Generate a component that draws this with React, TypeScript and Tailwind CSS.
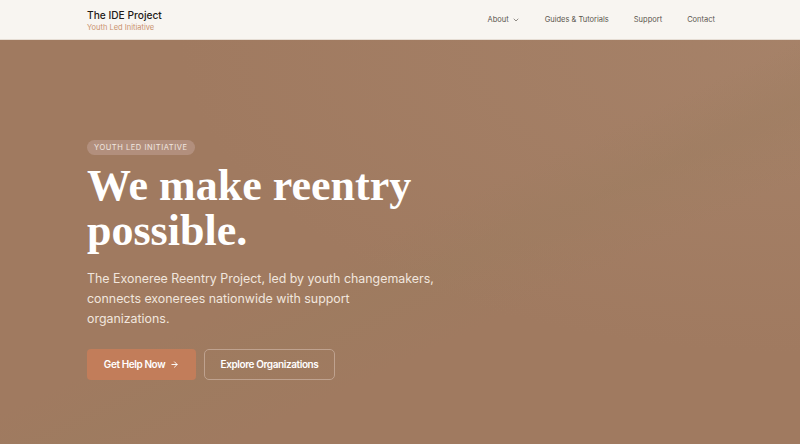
import { ArrowRight, ChevronDown } from "lucide-react";

// Top navigation bar
function Header() {
  return (
    <header className="h-[40px] bg-[#f8f5f1] border-b border-[#e6ddd4] flex items-center justify-between pl-[87px] pr-[85px]">
      <div className="flex flex-col leading-none">
        <span className="text-[10.2px] font-medium text-[#1f1b18] mt-[3px]">The IDE Project</span>
        <span className="text-[7.5px] text-[#c9916d] mt-[4px]">Youth Led Initiative</span>
      </div>
      <nav className="flex items-center gap-[25px] text-[7.5px] text-[#5b554f] mt-[1px]">
        <span className="flex items-center gap-[3px]">
          About <ChevronDown size={8} strokeWidth={2} />
        </span>
        <span>Guides &amp; Tutorials</span>
        <span>Support</span>
        <span>Contact</span>
      </nav>
    </header>
  );
}

export default function App() {
  return (
    <div className="w-[800px] h-[444px] overflow-hidden font-['Inter',sans-serif]">
      <Header />
      {/* Hero section */}
      <section className="relative h-[404px] bg-[#a07a60] overflow-hidden">
        <div className="absolute inset-0 bg-[radial-gradient(ellipse_at_100%_0%,rgba(170,135,110,0.6)_0%,transparent_55%)]" />
        <div className="absolute inset-0 bg-[linear-gradient(155deg,transparent_48%,rgba(155,125,95,0.35)_56%,transparent_66%)]" />
        <div className="relative pl-[87px] pt-[100px] flex flex-col items-start">
          <span className="rounded-full bg-[#b9998a]/70 px-[7px] py-[3.5px] text-[7.5px] tracking-[0.55px] text-[#f1e7e0] leading-none">
            YOUTH LED INITIATIVE
          </span>
          <h1 className="mt-[8.5px] font-['Liberation_Serif',serif] font-bold text-white text-[44px] leading-[45px]">
            We make reentry
            <br />
            possible.
          </h1>
          <p className="mt-[16px] text-[12.4px] leading-[20px] text-[#f1e6de]">
            The Exoneree Reentry Project, led by youth changemakers,
            <br />
            connects exonerees nationwide with support
            <br />
            organizations.
          </p>
          <div className="mt-[19.5px] flex gap-[8px]">
            <button className="h-[31px] w-[109px] rounded-[4px] bg-[#c27d5a] text-white text-[10px] font-semibold tracking-[-0.4px] flex items-center justify-center gap-[5px]">
              Get Help Now <ArrowRight size={9} strokeWidth={2.5} />
            </button>
            <button className="h-[31px] w-[131px] rounded-[5px] border border-[#bfa28f] text-white text-[10px] font-semibold tracking-[-0.4px] flex items-center justify-center">
              Explore Organizations
            </button>
          </div>
        </div>
      </section>
    </div>
  );
}
